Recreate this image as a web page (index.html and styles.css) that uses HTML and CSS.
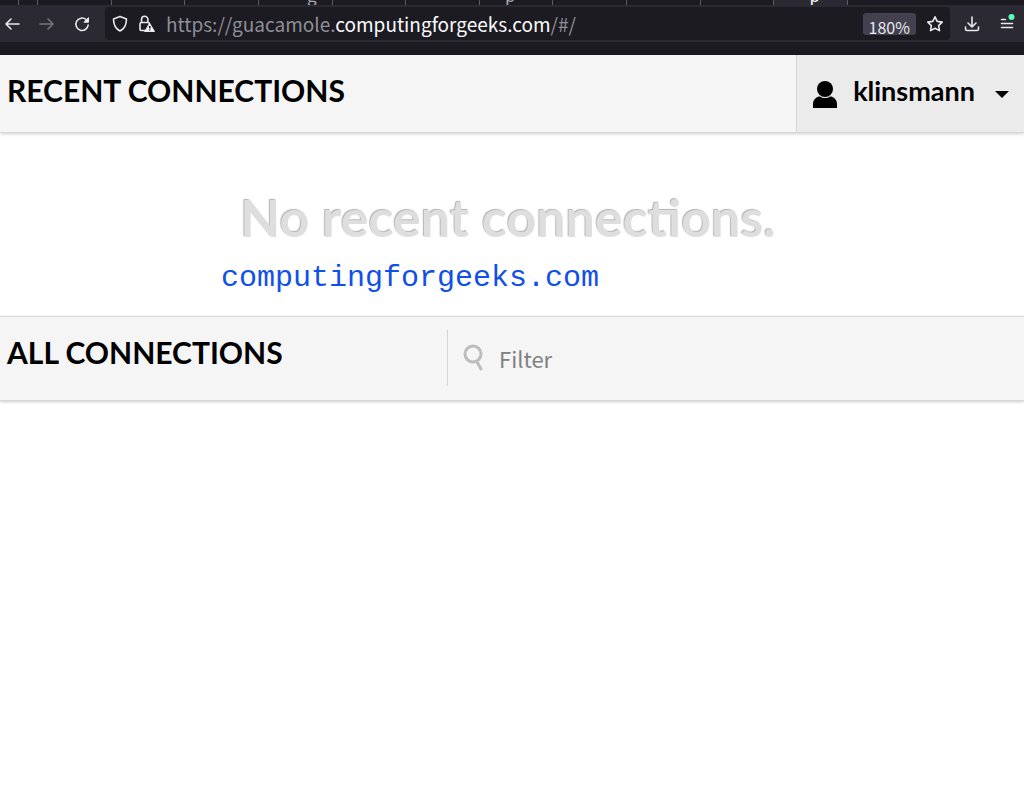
FILE: index.html
```html
<!DOCTYPE html>
<html lang="en">
  <head>
    <meta charset="UTF-8" />
    <meta name="viewport" content="width=device-width, initial-scale=1.0" />
    <title>Apache Guacamole</title>
    <link rel="stylesheet" href="styles.css">
  </head>
  <body>
    <div class="browser">
      <div class="tabs">
        <div class="tab tab-pinned"></div>
        <div class="tab tab-pinned"></div>
        <div class="tab"></div>
        <div class="tab"></div>
        <div class="tab"></div>
        <div class="tab"><span>g</span></div>
        <div class="tab"></div>
        <div class="tab"></div>
        <div class="tab"><span class="wide">p</span></div>
        <div class="tab"></div>
        <div class="tab"></div>
        <div class="tab"></div>
        <div class="tab tab-active"><span class="wide">p</span></div>
        <div class="tabs-end"></div>
      </div>

      <div class="toolbar">
        <div class="nav">
          <button class="icon-btn" aria-label="Back">
            <svg width="16" height="16" viewBox="0 0 16 16"><path d="M15 8H2M7 3L2 8l5 5" /></svg>
          </button>
          <button class="icon-btn" aria-label="Forward" disabled>
            <svg width="16" height="16" viewBox="0 0 16 16"><path d="M1 8h13M9 3l5 5-5 5" /></svg>
          </button>
          <button class="icon-btn" aria-label="Reload">
            <svg width="16" height="16" viewBox="0 0 16 16">
              <path d="M12 3.500A6.200 6.200 0 1 0 14.200 9" />
              <path class="solid" d="M14.500 2v4.200h-4.200z" />
            </svg>
          </button>
        </div>

        <div class="urlbar">
          <svg width="16" height="18" viewBox="0 0 16 18"><path d="M8 1.500L14.500 4c0 5-1.500 9.500-6.500 12C3 13.500 1.500 9 1.500 4z" /></svg>
          <svg width="18" height="18" viewBox="0 0 18 18">
            <path d="M8 15.500H3.500a1.500 1.500 0 0 1-1.500-1.500V9a1.500 1.500 0 0 1 1.500-1.500H10A1.500 1.500 0 0 1 11.500 9M3.500 7.500V4.500a3.200 3.200 0 0 1 6.400 0v3" />
            <path class="solid" d="M11.800 8.500L16.500 16.500H7z" />
            <path class="mark" d="M11.800 11v2.500M11.800 14.500v1" />
          </svg>
          <div class="url" role="textbox" aria-label="Address">https://guacamole.<b>computingforgeeks.com</b>/#/</div>
          <button class="zoom">180%</button>
          <button class="icon-btn" aria-label="Bookmark this page">
            <svg width="18" height="18" viewBox="0 0 18 18"><path d="M9 1.800l2.200 4.600 5 .7-3.600 3.500.9 5L9 13.200l-4.500 2.400.9-5L1.800 7.100l5-.7z" /></svg>
          </button>
        </div>

        <div class="actions">
          <button class="icon-btn" aria-label="Downloads">
            <svg width="16" height="16" viewBox="0 0 16 16"><path d="M8 1v9.500M4 7l4 4 4-4M1.500 11v2a1.500 1.500 0 0 0 1.500 1.500h10a1.500 1.500 0 0 0 1.500-1.500v-2" /></svg>
          </button>
          <button class="icon-btn" aria-label="Menu">
            <svg width="16" height="20" viewBox="0 0 16 20">
              <path d="M2.500 5.500h4M2.500 9.500h11M2.500 13.500h11" />
              <circle class="badge" cx="12.500" cy="3" r="3" />
            </svg>
          </button>
        </div>
      </div>
    </div>

    <main>
      <div class="header">
        <h2>RECENT CONNECTIONS</h2>
        <button class="user-menu">
          <svg width="24" height="28" viewBox="0 0 24 28">
            <circle cx="12" cy="9" r="8" />
            <path d="M0 28v-4c0-5 4-7.500 7-7.500 3 2 7 2 10 0 3 0 7 2.500 7 7.500v4z" />
          </svg>
          <span>klinsmann</span>
          <svg width="14" height="8" viewBox="0 0 14 8"><path d="M0 1h14L7 8z" /></svg>
        </button>
      </div>

      <div class="recent-connections">
        <p class="placeholder">No recent connections.</p>
        <p class="watermark">computingforgeeks.com</p>
      </div>

      <div class="header header-all">
        <h2>ALL CONNECTIONS</h2>
        <label class="filter">
          <svg width="22" height="28" viewBox="0 0 22 28">
            <circle cx="10" cy="10" r="8" />
            <path d="M13.500 17L18.500 26" />
          </svg>
          <input type="text" placeholder="Filter" aria-label="Filter" />
        </label>
      </div>
    </main>
  </body>
</html>
```

FILE: styles.css
```css
* {
  box-sizing: border-box;
}

body {
  display: flex;
  flex-direction: column;
  min-height: 100vh;
  margin: 0;
  background-color: white;
  color: black;
  font-family: Lato, sans-serif;
}

main {
  flex: 1;
}

h2,
p {
  margin: 0;
}

button {
  padding: 0;
  border: none;
  background: none;
  color: inherit;
  font-family: inherit;
}

/* Browser chrome */

.browser {
  background-color: #1c1b22;
  color: #fbfbfe;
  font-family: 'Noto Sans CJK SC', sans-serif;
  padding-bottom: 13px;
}

.browser svg {
  display: block;
  flex: none;
  fill: none;
  stroke: #e8e8ee;
  stroke-width: 1.6;
  stroke-linecap: round;
  stroke-linejoin: round;
}

.browser .solid {
  fill: #fbfbfe;
  stroke-width: 1;
}

.browser .mark {
  stroke: #1c1b22;
  stroke-linecap: butt;
}

.browser .badge {
  fill: #54ffbd;
  stroke: none;
}

.tabs {
  display: flex;
  height: 5px;
  overflow: hidden;
}

.tab {
  flex: 1;
  display: flex;
  align-items: flex-end;
  justify-content: flex-end;
  border-right: 1px solid #5b5a62;
  color: #a9a9b0;
  font-size: 17px;
  line-height: 20px;
}

.tab span {
  padding-right: 15px;
}

.tab .wide {
  padding-right: 37px;
}

.tab-pinned {
  flex: 0 0 19px;
}

.tab-active {
  background-color: #2b2a33;
  color: #fbfbfe;
}

.tab-active .wide {
  padding-right: 27px;
}

.tabs-end {
  flex: 0 0 176px;
}

.toolbar {
  display: flex;
  align-items: center;
  height: 37px;
  background-color: #2b2a33;
}

.nav {
  display: flex;
  gap: 19px;
  padding: 0 15px 0 4px;
}

.icon-btn:disabled {
  opacity: 0.4;
}

.urlbar {
  flex: 1;
  display: flex;
  align-items: center;
  gap: 10px;
  height: 33px;
  padding: 0 6px 0 7px;
  border-radius: 4px;
  background-color: #1c1b22;
}

.url {
  flex: 1;
  color: #8f8f96;
  font-size: 19px;
  line-height: 30px;
  padding-top: 1px;
  white-space: nowrap;
}

.url b {
  color: #fbfbfe;
  font-weight: normal;
}

.zoom {
  height: 22px;
  padding: 4px 6px 0;
  overflow: hidden;
  border-radius: 3px;
  background-color: #42414d;
  color: #e8e8ee;
  font-size: 16px;
  line-height: 20px;
}

.actions {
  display: flex;
  align-items: center;
  gap: 19px;
  padding: 0 9px 0 14px;
}

/* Guacamole home */

.header {
  display: flex;
  align-items: stretch;
  height: 78px;
  border-bottom: 1px solid #d8d8d8;
  background-color: #f5f5f5;
  box-shadow: 0 1px 3px rgba(0, 0, 0, 0.2);
}

.header h2 {
  flex: 1;
  padding: 15px 7px;
  font-size: 30px;
  line-height: 40px;
}

.user-menu {
  display: flex;
  align-items: center;
  gap: 16px;
  padding: 0 15px 0 16px;
  border-left: 1px solid #d4d4d4;
  background-color: #ebebeb;
  font-size: 27px;
  font-weight: bold;
}

.user-menu span {
  padding: 0 4px 6px 0;
}

.recent-connections {
  padding: 54px 0 14px;
}

.placeholder {
  padding-right: 8px;
  color: #dedede;
  font-size: 52px;
  font-weight: bold;
  line-height: 60px;
  text-align: center;
  text-shadow: -1px -1px 1px #b4b4b4;
}

.watermark {
  padding: 7px 0 0 221px;
  color: #1150e8;
  font-family: 'Liberation Mono', monospace;
  font-size: 30px;
  line-height: 48px;
}

.header-all {
  height: 85px;
  border-top: 1px solid #dcdcdc;
}

.filter {
  display: flex;
  flex: 0 0 577px;
  align-items: center;
  gap: 14px;
  margin: 13px 0 14px;
  padding-left: 15px;
  border-left: 1px solid #d4d4d4;
}

.filter svg {
  flex: none;
  fill: none;
  stroke: #bcbcbc;
  stroke-width: 3;
}

.filter input {
  flex: 1;
  min-width: 0;
  padding: 0;
  border: none;
  outline: none;
  background: none;
  font-family: 'Noto Sans CJK SC', sans-serif;
  font-size: 22px;
}

.filter input::placeholder {
  color: #808080;
}
```
